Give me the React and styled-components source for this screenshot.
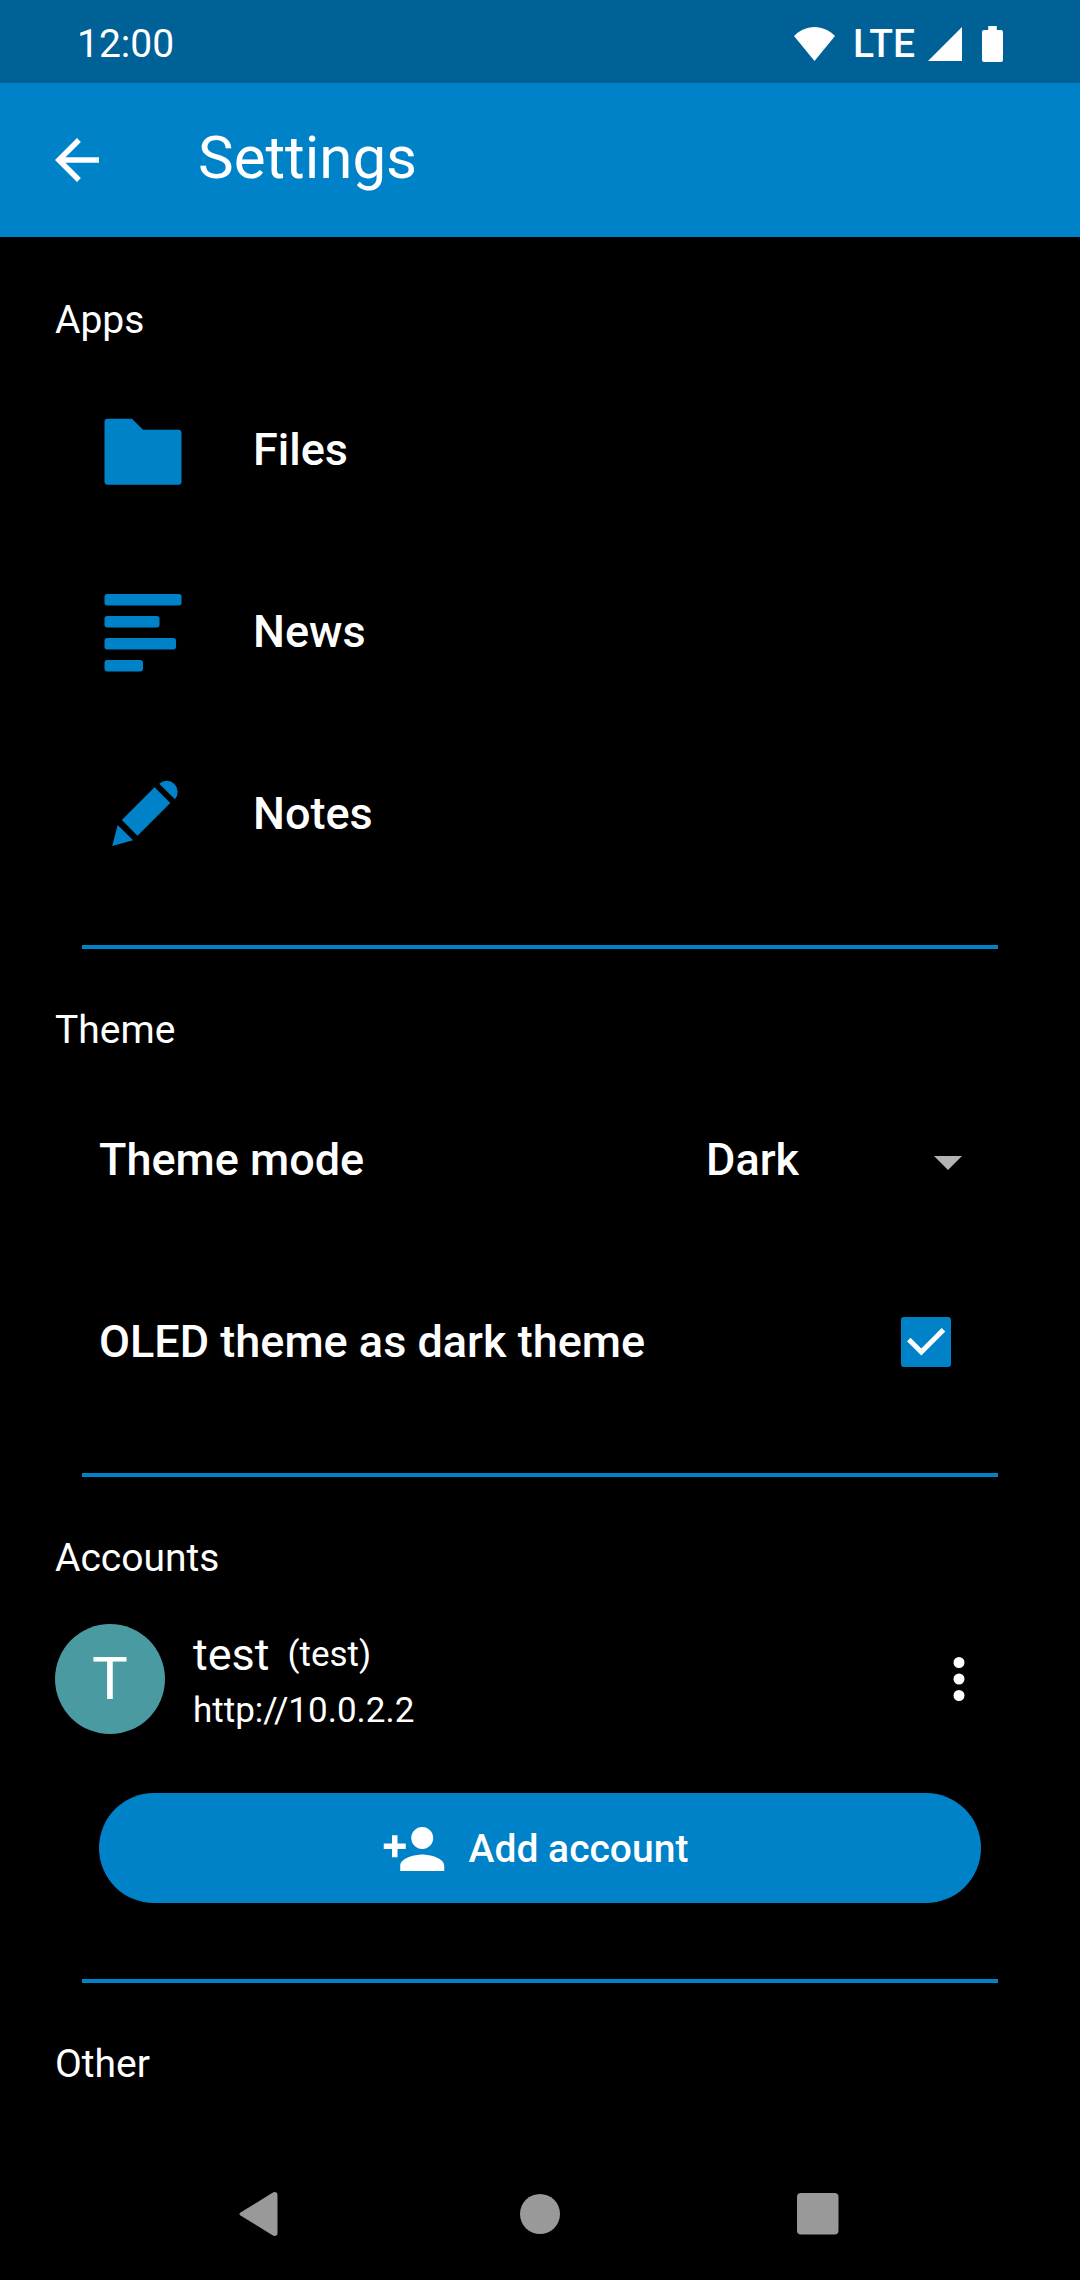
import React, { useState } from "react";
import styled, { createGlobalStyle } from "styled-components";

const color = {
  primary: "#0082c9",
  primaryDark: "#006197",
  background: "#000000",
  text: "#ffffff",
  avatar: "#4a9aa2",
  muted: "#b3b3b3",
  nav: "#999999",
};

const GlobalStyle = createGlobalStyle`
  *, *::before, *::after {
    box-sizing: border-box;
  }
  body {
    margin: 0;
    background: ${color.background};
    color: ${color.text};
    font-family: Roboto, "Noto Sans", sans-serif;
  }
  svg {
    display: block;
    flex: none;
  }
`;

const Screen = styled.div`
  min-height: 100vh;
  display: flex;
  flex-direction: column;
`;

const StatusBar = styled.div`
  display: flex;
  align-items: center;
  justify-content: space-between;
  height: 83px;
  padding: 4px 77px 0;
  background: ${color.primaryDark};
  font-size: 39px;
  line-height: 48px;
`;

const StatusIcons = styled.div`
  display: flex;
  align-items: center;
  gap: 12px;
`;

const NetworkType = styled.span`
  font-weight: 500;
`;

const AppBar = styled.header`
  display: flex;
  align-items: center;
  gap: 88px;
  height: 154px;
  padding: 0 44px;
  background: ${color.primary};
`;

const IconButton = styled.button`
  flex: none;
  padding: 0;
  border: 0;
  background: none;
  color: inherit;
  cursor: pointer;
`;

const Title = styled.h1`
  margin: 0;
  padding-bottom: 4px;
  font-size: 60px;
  font-weight: 400;
  line-height: 72px;
`;

const Content = styled.main`
  flex: 1;
  padding-top: 2px;
`;

const Section = styled.section`
  padding: 56px 55px 40px;
`;

const SectionTitle = styled.h2`
  margin: 0 0 14px;
  font-size: 39px;
  font-weight: 400;
  line-height: 50px;
`;

const Divider = styled.hr`
  height: 4px;
  margin: 0 82px;
  border: 0;
  background: ${color.primary};
`;

const AppRow = styled.button`
  display: flex;
  align-items: center;
  gap: 66px;
  width: 100%;
  height: 182px;
  padding: 0 44px;
  border: 0;
  background: none;
  color: inherit;
  font: 500 45px/56px Roboto, "Noto Sans", sans-serif;
  text-align: left;
  cursor: pointer;
`;

const AppIcon = styled.svg`
  width: 88px;
  height: 88px;
  fill: ${color.primary};
`;

const PreferenceRow = styled.div`
  display: flex;
  align-items: center;
  justify-content: space-between;
  height: 182px;
  padding: 0 44px;
  font-size: 45px;
  font-weight: 500;
  line-height: 56px;
`;

const SelectBox = styled.div`
  position: relative;
  width: 275px;
`;

const Select = styled.select`
  appearance: none;
  display: block;
  width: 100%;
  padding: 0 66px 0 0;
  border: 0;
  background: ${color.background};
  color: inherit;
  font: inherit;
`;

const SelectArrow = styled.svg`
  position: absolute;
  top: 24px;
  right: 19px;
  pointer-events: none;
`;

const CheckBoxFrame = styled.span`
  display: grid;
  margin-right: 30px;
  & > * {
    grid-area: 1 / 1;
  }
`;

const CheckBox = styled.input`
  appearance: none;
  width: 50px;
  height: 50px;
  margin: 0;
  border: 5px solid ${color.muted};
  border-radius: 3px;
  cursor: pointer;
  &:checked {
    border-color: ${color.primary};
    background: ${color.primary};
  }
  & + svg {
    visibility: hidden;
    pointer-events: none;
  }
  &:checked + svg {
    visibility: visible;
  }
`;

const AccountRow = styled.div`
  display: flex;
  align-items: center;
  gap: 28px;
  height: 164px;
  padding-right: 33px;
`;

const Avatar = styled.div`
  display: grid;
  place-items: center;
  flex: none;
  width: 110px;
  height: 110px;
  border-radius: 50%;
  background: ${color.avatar};
  font-size: 60px;
  line-height: 72px;
`;

const AccountText = styled.div`
  flex: 1;
  min-width: 0;
`;

const AccountName = styled.div`
  display: flex;
  align-items: center;
  gap: 18px;
  font-size: 45px;
  line-height: 64px;
`;

const UserName = styled.span`
  font-size: 35px;
`;

const ServerUrl = styled.div`
  font-size: 35px;
  line-height: 48px;
`;

const AddArea = styled.div`
  padding: 32px 44px 36px;
`;

const AddButton = styled.button`
  display: flex;
  align-items: center;
  justify-content: center;
  gap: 22px;
  width: 100%;
  height: 110px;
  padding: 2px 55px 0 44px;
  border: 0;
  border-radius: 55px;
  background: ${color.primary};
  color: inherit;
  font: 500 39px/48px Roboto, "Noto Sans", sans-serif;
  cursor: pointer;
`;

const NavigationBar = styled.nav`
  display: grid;
  grid-template-columns: repeat(3, 1fr);
  justify-items: center;
  align-items: center;
  height: 132px;
  padding: 0 123px;
  color: ${color.nav};
`;

const apps = [
  {
    name: "Files",
    shape: (
      <path d="M1.5 2.3c-.25 0-.5.25-.5.5v11c0 .26.24.5.5.5h13c.26 0 .5-.24.5-.5v-9c0-.25-.25-.5-.5-.5H8l-2-2z" />
    ),
  },
  {
    name: "News",
    shape: (
      <>
        <rect x="1" y="1.1" width="14" height="2.1" rx=".5" />
        <rect x="1" y="5.1" width="10" height="2.1" rx=".5" />
        <rect x="1" y="9.1" width="13" height="2.1" rx=".5" />
        <rect x="1" y="13.1" width="7" height="2.1" rx=".5" />
      </>
    ),
  },
  {
    name: "Notes",
    shape: (
      <>
        <path d="M10.95 2.5A2 2 0 0 1 13.8 5.3z" />
        <path d="M10.1 3.15 12.95 6 7 11.95 4.15 9.1z" />
        <path d="M3.4 10 6.2 12.75 2.4 13.8z" />
      </>
    ),
  },
];

function MaterialIcon({ d }) {
  return (
    <svg width="66" height="66" viewBox="0 0 24 24" fill="currentColor" aria-hidden="true">
      <path d={d} />
    </svg>
  );
}

export default function App() {
  const [mode, setMode] = useState("Dark");
  const [oled, setOled] = useState(true);

  return (
    <Screen>
      <GlobalStyle />
      <StatusBar>
        <span>12:00</span>
        <StatusIcons>
          <svg width="47" height="34" viewBox="0 0 47 34" fill="currentColor" aria-hidden="true">
            <path d="M0 9C5.500 3.500 12.500 0 20.500 0S35.500 3.500 41 9L20.500 34z" />
          </svg>
          <NetworkType>LTE</NetworkType>
          <svg width="43" height="34" viewBox="0 0 43 34" fill="currentColor" aria-hidden="true">
            <path d="M35 0v34H1z" />
          </svg>
          <svg width="21" height="36" viewBox="0 0 21 36" fill="currentColor" aria-hidden="true">
            <path d="M6.200 0h8.600v4h4.200a2 2 0 0 1 2 2v28a2 2 0 0 1-2 2H2a2 2 0 0 1-2-2V6a2 2 0 0 1 2-2h4.200z" />
          </svg>
        </StatusIcons>
      </StatusBar>

      <AppBar>
        <IconButton type="button" aria-label="Back">
          <MaterialIcon d="M20 11H7.830l5.590-5.590L12 4l-8 8 8 8 1.410-1.410L7.830 13H20v-2z" />
        </IconButton>
        <Title>Settings</Title>
      </AppBar>

      <Content>
        <Section>
          <SectionTitle>Apps</SectionTitle>
          {apps.map((app) => (
            <AppRow type="button" key={app.name}>
              <AppIcon viewBox="0 0 16 16" aria-hidden="true">
                {app.shape}
              </AppIcon>
              {app.name}
            </AppRow>
          ))}
        </Section>
        <Divider />

        <Section>
          <SectionTitle>Theme</SectionTitle>
          <PreferenceRow>
            <label htmlFor="theme-mode">Theme mode</label>
            <SelectBox>
              <Select id="theme-mode" value={mode} onChange={(e) => setMode(e.target.value)}>
                <option>Dark</option>
                <option>Light</option>
              </Select>
              <SelectArrow width="28" height="14" viewBox="0 0 28 14" fill={color.muted} aria-hidden="true">
                <path d="M0 0h28L14 14z" />
              </SelectArrow>
            </SelectBox>
          </PreferenceRow>
          <PreferenceRow>
            <label htmlFor="oled-theme">OLED theme as dark theme</label>
            <CheckBoxFrame>
              <CheckBox
                id="oled-theme"
                type="checkbox"
                checked={oled}
                onChange={(e) => setOled(e.target.checked)}
              />
              <svg width="50" height="50" viewBox="0 0 50 50" fill="currentColor" aria-hidden="true">
                <path d="M6 24.300 9.500 20.700 20.300 31.400 40.700 11 44.300 14.500 20.300 38.600z" />
              </svg>
            </CheckBoxFrame>
          </PreferenceRow>
        </Section>
        <Divider />

        <Section>
          <SectionTitle>Accounts</SectionTitle>
          <AccountRow>
            <Avatar>T</Avatar>
            <AccountText>
              <AccountName>
                test <UserName>(test)</UserName>
              </AccountName>
              <ServerUrl>http://10.0.2.2</ServerUrl>
            </AccountText>
            <IconButton type="button" aria-label="Account options">
              <MaterialIcon d="M12 8a2 2 0 1 0 0-4 2 2 0 0 0 0 4zm0 2a2 2 0 1 0 0 4 2 2 0 0 0 0-4zm0 6a2 2 0 1 0 0 4 2 2 0 0 0 0-4z" />
            </IconButton>
          </AccountRow>
          <AddArea>
            <AddButton type="button">
              <MaterialIcon d="M15 12c2.210 0 4-1.790 4-4s-1.790-4-4-4-4 1.790-4 4 1.790 4 4 4zm-9-2V7H4v3H1v2h3v3h2v-3h3v-2H6zm9 4c-2.670 0-8 1.340-8 4v2h16v-2c0-2.660-5.330-4-8-4z" />
              Add account
            </AddButton>
          </AddArea>
        </Section>
        <Divider />

        <Section>
          <SectionTitle>Other</SectionTitle>
        </Section>
      </Content>

      <NavigationBar aria-label="System navigation">
        <IconButton type="button" aria-label="Back">
          <svg width="46" height="46" viewBox="0 0 46 46" fill="currentColor" aria-hidden="true">
            <path d="M1.500 21.500 33.500 1.700c2.500-1.500 5-.500 5 2.300v38c0 2.800-2.500 3.800-5 2.300L1.500 24.500c-1.500-1-1.500-2 0-3z" />
          </svg>
        </IconButton>
        <IconButton type="button" aria-label="Home">
          <svg width="40" height="40" viewBox="0 0 40 40" fill="currentColor" aria-hidden="true">
            <circle cx="20" cy="20" r="20" />
          </svg>
        </IconButton>
        <IconButton type="button" aria-label="Overview">
          <svg width="42" height="42" viewBox="0 0 42 42" fill="currentColor" aria-hidden="true">
            <rect x="0" y="0" width="41.500" height="41.500" rx="4" />
          </svg>
        </IconButton>
      </NavigationBar>
    </Screen>
  );
}
